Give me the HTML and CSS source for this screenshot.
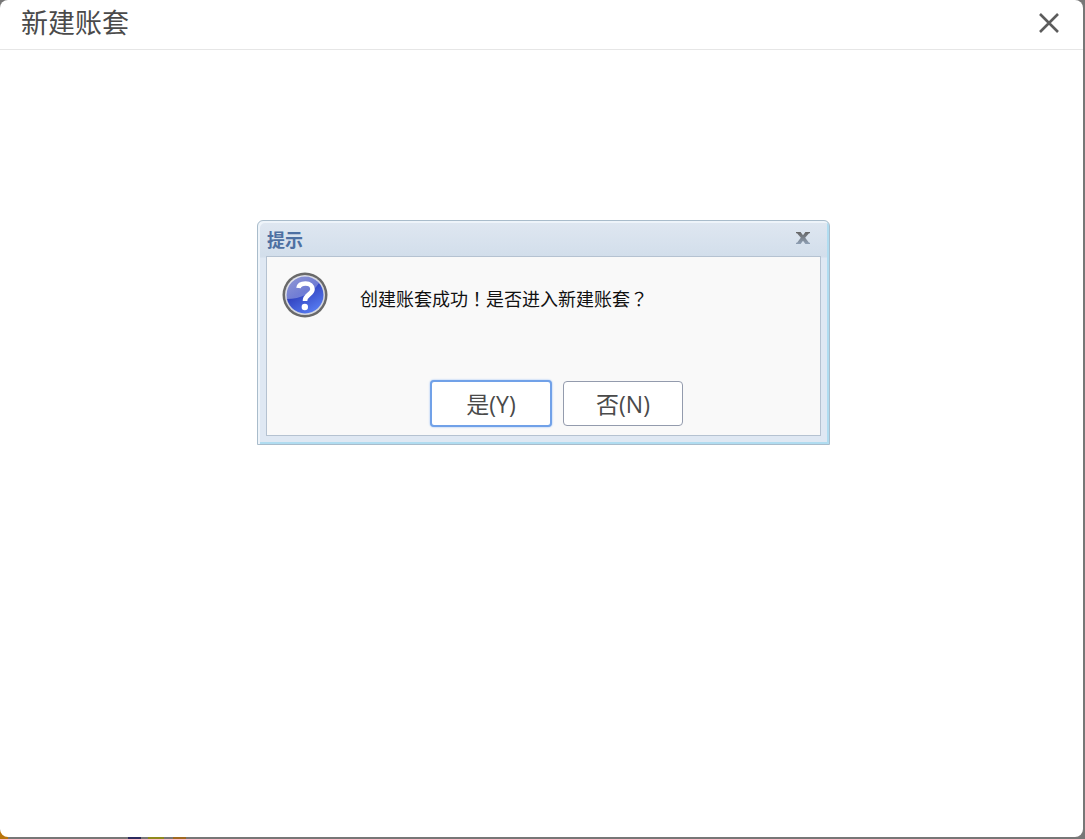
FILE: index.html
```html
<!DOCTYPE html>
<html lang="zh-CN">
<head>
  <meta charset="UTF-8">
  <meta name="viewport" content="width=device-width, initial-scale=1.0">
  <title>新建账套</title>
  <link rel="stylesheet" href="styles.css">
</head>
<body>
  <div class="window">
    <header class="window-header">
      <h1>新建账套</h1>
      <button type="button" class="window-close" aria-label="关闭">
        <svg width="20" height="20" viewBox="0 0 20 20">
          <path d="M1 1L19 19M19 1L1 19" stroke="#5c5c5c" stroke-width="2.6" fill="none"/>
        </svg>
      </button>
    </header>
    <main class="window-body">
      <section class="dialog" role="dialog" aria-labelledby="dialogTitle">
        <div class="dialog-header">
          <h2 id="dialogTitle">提示</h2>
          <button type="button" class="dialog-close" aria-label="关闭">
            <svg width="14" height="12" viewBox="0 0 14 12">
              <defs>
                <linearGradient id="closeFill" x1="0" y1="0" x2="0" y2="1">
                  <stop offset="0" stop-color="#666"/>
                  <stop offset="1" stop-color="#8fa0b5"/>
                </linearGradient>
              </defs>
              <path d="M0 0H4.6L7 3.2L9.4 0H14V1.2H13L9.2 5.8L13 10.8H14V12H9.4L7 8.8L4.6 12H0V10.8H1L4.8 5.8L1 1.2H0Z" fill="url(#closeFill)"/>
            </svg>
          </button>
        </div>
        <div class="dialog-body">
          <div class="message">
            <!-- question icon -->
            <svg class="message-icon" width="46" height="46" viewBox="0 0 46 46" aria-hidden="true">
              <defs>
                <linearGradient id="ballFill" x1="0" y1="0" x2="0.6" y2="1">
                  <stop offset="0" stop-color="#3b48b4"/>
                  <stop offset="0.5" stop-color="#3446c2"/>
                  <stop offset="1" stop-color="#5478ee"/>
                </linearGradient>
                <linearGradient id="shineFill" x1="0" y1="0" x2="1" y2="1">
                  <stop offset="0" stop-color="#fff" stop-opacity="0.45"/>
                  <stop offset="1" stop-color="#fff" stop-opacity="0.2"/>
                </linearGradient>
              </defs>
              <circle cx="23" cy="23" r="22.5" fill="#696969"/>
              <circle cx="23" cy="23" r="20" fill="#d5d7df"/>
              <circle cx="23" cy="23" r="18.5" fill="url(#ballFill)"/>
              <path d="M4.5 27A18.5 18.5 0 0 1 37 11C31 21 19 27 4.5 27Z" fill="url(#shineFill)"/>
              <path d="M16.5 16C17 12.5 20 11.5 23.5 11.5C28 11.5 30.500 14 30.5 17.2C30.5 22.5 23 22.5 23 29" stroke="#fff" stroke-width="4.6" fill="none"/>
              <circle cx="22.8" cy="35" r="3.2" fill="#fff"/>
            </svg>
            <p>创建账套成功<span class="mark" lang="zh-TW">！</span>是否进入新建账套<span class="mark" lang="zh-TW">？</span></p>
          </div>
          <div class="actions">
            <button type="button" class="button button-primary">是(Y)</button>
            <button type="button" class="button">否(N)</button>
          </div>
        </div>
      </section>
    </main>
  </div>
</body>
</html>
```
FILE: styles.css
```css
* {
  box-sizing: border-box;
}
body {
  margin: 0;
  min-height: 100vh;
  display: flex;
  padding: 0 2px 2px 0;
  background-color: #777;
  background-image: linear-gradient(to right, #b8740c 8px, #777 8px, #777 128px, #2b2b5e 128px, #2b2b5e 141px, #777 141px, #777 148px, #8e8a1c 148px, #8e8a1c 164px, #777 164px, #777 173px, #a06a20 173px, #a06a20 186px, #777 186px);
  background-size: 100% 8px;
  background-position: bottom left;
  background-repeat: no-repeat;
  font-family: "Open Sans", "Noto Sans CJK SC", sans-serif;
}
h1, h2, p {
  margin: 0;
}
button {
  font-family: inherit;
  cursor: pointer;
}
.window {
  flex: 1;
  display: flex;
  flex-direction: column;
  background-color: #fff;
  border-radius: 8px;
}
.window-header {
  display: flex;
  justify-content: space-between;
  align-items: center;
  height: 50px;
  padding: 0 24px 4px 21px;
  border-bottom: 1px solid #e6e6e6;
}
.window-header h1 {
  font-size: 27px;
  line-height: 40px;
  font-weight: 400;
  color: #4a4a4a;
}
.window-close,
.dialog-close {
  display: flex;
  padding: 0;
  border: none;
  background: none;
}
.window-body {
  flex: 1;
  padding: 170px 20px 20px 24px;
}
.dialog {
  width: 573px;
  max-width: 100%;
  margin: 0 auto;
  padding: 0 8px 8px;
  border: 1px solid #a9bccb;
  border-radius: 6px 6px 0 0;
  background: linear-gradient(#dfe7f1, #d2deeb 36px, #dfe8f3 37px);
  box-shadow: inset 2px 2px 0 #eef4fa, inset -2px -2px 0 #b0dcf0;
}
.dialog-header {
  display: flex;
  justify-content: space-between;
  align-items: flex-start;
  height: 35px;
  padding: 7px 11px 0 1px;
}
.dialog-close {
  padding-top: 4px;
}
.dialog-header h2 {
  font-size: 18px;
  line-height: 24px;
  font-weight: 700;
  color: #4e70a2;
}
.dialog-body {
  height: 180px;
  display: flex;
  flex-direction: column;
  justify-content: space-between;
  padding: 15px 15px 8px;
  border: 1px solid #b5c2d1;
  background-color: #f9f9f9;
}
.message {
  display: flex;
  gap: 32px;
}
.message p {
  padding-top: 14px;
  font-size: 18px;
  line-height: 24px;
  color: #111;
}
/* full-width marks centred in their cell */
.mark {
  font-family: "Noto Sans CJK TC", sans-serif;
}
.actions {
  display: flex;
  justify-content: center;
  align-items: center;
  gap: 11px;
  padding-left: 26px;
}
.button {
  width: 120px;
  height: 45px;
  padding: 0 0 2px;
  border: 1px solid #939bad;
  border-radius: 4px;
  background-color: #fff;
  font-size: 23px;
  font-weight: 400;
  color: #4a4a4a;
}
.button-primary {
  width: 122px;
  height: 47px;
  border: 2px solid #71a1e8;
  box-shadow: 0 0 2px #8ab6f5;
}
```
